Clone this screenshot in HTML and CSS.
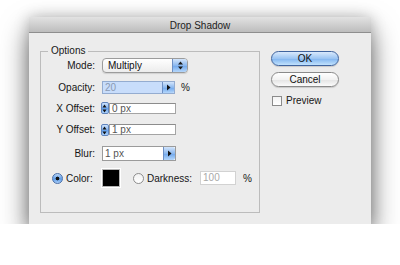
FILE: index.html
```html
<!DOCTYPE html>
<html lang="en">
<head>
  <meta charset="UTF-8" />
  <title>Drop Shadow</title>
  <link rel="stylesheet" href="styles.css">
</head>
<body>

<div class="window">
  <div class="titlebar">Drop Shadow</div>

  <div class="dialog">
    <fieldset class="options">
      <legend>Options</legend>

      <div class="form-grid">
        <label class="lbl">Mode:</label>
        <div class="ctl">
          <div class="popup">
            <span class="popup-text">Multiply</span>
            <span class="popup-arrows">
              <svg width="7" height="11" viewBox="0 0 7 11"><path d="M3.5 1.5 L6 4.5 H1 Z M3.5 9.5 L6 6.5 H1 Z" fill="#1a1a1a"/></svg>
            </span>
          </div>
        </div>

        <label class="lbl">Opacity:</label>
        <div class="ctl">
          <div class="combo combo-focus">
            <span class="combo-text">20</span>
            <span class="combo-btn">
              <svg width="5" height="7" viewBox="0 0 5 7"><path d="M1 0.5 L4.5 3.5 L1 6.5 Z" fill="#111"/></svg>
            </span>
          </div>
          <span class="unit">%</span>
        </div>

        <label class="lbl">X Offset:</label>
        <div class="ctl">
          <span class="stepper">
            <svg width="7" height="11" viewBox="0 0 7 11"><path d="M3.5 1.5 L5.5 4.5 H1.5 Z M3.5 9.5 L5.5 6.5 H1.5 Z" fill="#111"/></svg>
          </span>
          <span class="field field-wide">0 px</span>
        </div>

        <label class="lbl">Y Offset:</label>
        <div class="ctl">
          <span class="stepper">
            <svg width="7" height="11" viewBox="0 0 7 11"><path d="M3.5 1.5 L5.5 4.5 H1.5 Z M3.5 9.5 L5.5 6.5 H1.5 Z" fill="#111"/></svg>
          </span>
          <span class="field field-wide">1 px</span>
        </div>

        <label class="lbl">Blur:</label>
        <div class="ctl">
          <div class="combo combo-plain">
            <span class="combo-text">1 px</span>
            <span class="combo-btn">
              <svg width="5" height="7" viewBox="0 0 5 7"><path d="M1 0.5 L4.5 3.5 L1 6.5 Z" fill="#111"/></svg>
            </span>
          </div>
        </div>

        <div class="radio-cell">
          <span class="radio radio-on"></span>
          <span>Color:</span>
        </div>
        <div class="ctl ctl-color">
          <span class="swatch"></span>
          <span class="radio"></span>
          <span class="radio-label">Darkness:</span>
          <span class="field field-dim">100</span>
          <span class="unit">%</span>
        </div>
      </div>
    </fieldset>

    <div class="actions">
      <button class="btn btn-default">OK</button>
      <button class="btn">Cancel</button>
      <label class="check-row"><span class="checkbox"></span>Preview</label>
    </div>
  </div>
</div>

</body>
</html>
```

FILE: styles.css
```css
* {
  box-sizing: border-box;
}

body {
  margin: 0;
  background: #fff;
  font-family: "Liberation Sans", Arial, sans-serif;
  font-size: 10px;
  color: #161616;
}

.window {
  margin: 17px 0 0 29px;
  width: 342px;
  height: 207px;
  background: #ececec;
  box-shadow: 0 14px 26px rgba(0,0,0,0.55), 0 0 14px rgba(0,0,0,0.22);
}

.titlebar {
  height: 16px;
  padding-top: 1px;
  line-height: 15px;
  text-align: center;
  color: #222;
  background: linear-gradient(#e2e2e2, #bdbdbd);
  border-bottom: 1px solid #8e8e8e;
}

.dialog {
  display: flex;
  padding: 12px 0 0 11px;
}

/* groupe Options */
.options {
  margin: 0;
  padding: 0;
  width: 220px;
  height: 168px;
  min-width: 0;
  border: 1px solid #bcbcbc;
}

.options legend {
  margin-left: 7px;
  padding: 0 3px;
  line-height: 12px;
}

.form-grid {
  display: grid;
  grid-template-columns: 60px 1fr;
  grid-template-rows: 21px 22px 20px 23px 24px 26px;
  align-items: center;
  margin-top: -2px;
}

.lbl {
  text-align: right;
  padding-right: 6px;
}

.ctl {
  display: flex;
  align-items: center;
}

.unit {
  margin-left: 6px;
}

/* menu déroulant */
.popup {
  display: flex;
  width: 86px;
  height: 15px;
  margin-left: 1px;
  border: 1px solid #9c9c9c;
  border-radius: 4px;
  background: linear-gradient(#ffffff, #ececec);
  box-shadow: 0 1px 1px rgba(0,0,0,0.12);
  overflow: hidden;
}

.popup-text {
  flex: 1;
  padding-left: 5px;
  line-height: 13px;
  color: #111;
}

.popup-arrows {
  width: 15px;
  display: flex;
  align-items: center;
  justify-content: center;
  border-left: 1px solid #6d8fc4;
  background: linear-gradient(#d3e5fb, #8bb8ef 50%, #6ea6ec 51%, #b5d7fb);
}

/* combo (champ + bouton) */
.combo {
  display: flex;
  width: 74px;
  margin-left: 1px;
  border: 1px solid #9b9b9b;
  overflow: hidden;
}

.combo-text {
  flex: 1;
  padding-left: 2px;
}

.combo-btn {
  width: 12px;
  display: flex;
  align-items: center;
  justify-content: center;
  border-left: 1px solid #6d8fc4;
  border-radius: 0 2px 2px 0;
  background: linear-gradient(#d3e5fb, #8bb8ef 50%, #6ea6ec 51%, #b5d7fb);
}

.combo-focus {
  width: 73px;
  height: 13px;
  background: #c8ddfb;
  border-color: #94acd0;
}

.combo-focus .combo-text {
  line-height: 11px;
  color: #8a9ab2;
}

.combo-plain {
  height: 15px;
  background: #fff;
}

.combo-plain .combo-text {
  line-height: 13px;
  color: #555;
}

/* petites flèches + champ */
.stepper {
  width: 8px;
  height: 12px;
  display: flex;
  border: 1px solid #5f84bd;
  border-radius: 2px;
  background: linear-gradient(#cfe3fb, #7fb1ee 50%, #5f9deb 51%, #b0d4fb);
}

.stepper svg {
  margin-left: -1px;
}

.field {
  background: #fff;
  border: 1px solid #a4a4a4;
  border-top-color: #8c8c8c;
  padding-left: 2px;
}

.field-wide {
  width: 67px;
  height: 11px;
  line-height: 9px;
  color: #555;
}

.field-dim {
  width: 36px;
  height: 14px;
  line-height: 12px;
  color: #a9a9a9;
  border-color: #d2d2d2;
  margin-left: 8px;
}

/* ligne Couleur / Obscurité */
.radio-cell {
  display: flex;
  align-items: center;
  padding-left: 11px;
}

.radio {
  width: 11px;
  height: 11px;
  margin-right: 3px;
  border-radius: 50%;
  border: 1px solid #8d8d8d;
  background: linear-gradient(#f2f2f2, #ffffff);
  flex-shrink: 0;
}

.radio-on {
  border-color: #4a6fa8;
  background: radial-gradient(circle, #111 0 1.6px, transparent 2.2px), linear-gradient(#b9d6f8, #5d9be6 55%, #a9cdf8);
}

.ctl-color .radio {
  margin-left: 13px;
}

.swatch {
  width: 18px;
  height: 18px;
  margin-left: 1px;
  background: #000;
  border: 1px solid #dedede;
  outline: 1px solid #b5b5b5;
  outline-offset: -1px;
  box-shadow: 0 0 0 1px #fff;
}

.ctl-color .unit {
  margin-left: 7px;
}

/* boutons à droite */
.actions {
  display: flex;
  flex-direction: column;
  margin: 6px 0 0 11px;
}

.btn {
  width: 68px;
  height: 15px;
  padding: 0;
  font: inherit;
  line-height: 13px;
  color: #111;
  border: 1px solid #8a8a8a;
  border-radius: 8px;
  background: linear-gradient(#ffffff, #f2f2f2 50%, #e3e3e3 51%, #fbfbfb);
  box-shadow: 0 1px 1px rgba(0,0,0,0.15);
  margin-bottom: 6px;
}

.btn-default {
  border-color: #40649e;
  background: linear-gradient(#d9e9fc, #9cc5f3 50%, #80b4ef 51%, #c1e2fd);
}

.check-row {
  display: flex;
  align-items: center;
  margin-top: 2px;
  margin-left: 1px;
}

.checkbox {
  width: 10px;
  height: 10px;
  margin-right: 4px;
  border: 1px solid #8b8b8b;
  background: linear-gradient(#f3f3f3, #ffffff);
}
```
